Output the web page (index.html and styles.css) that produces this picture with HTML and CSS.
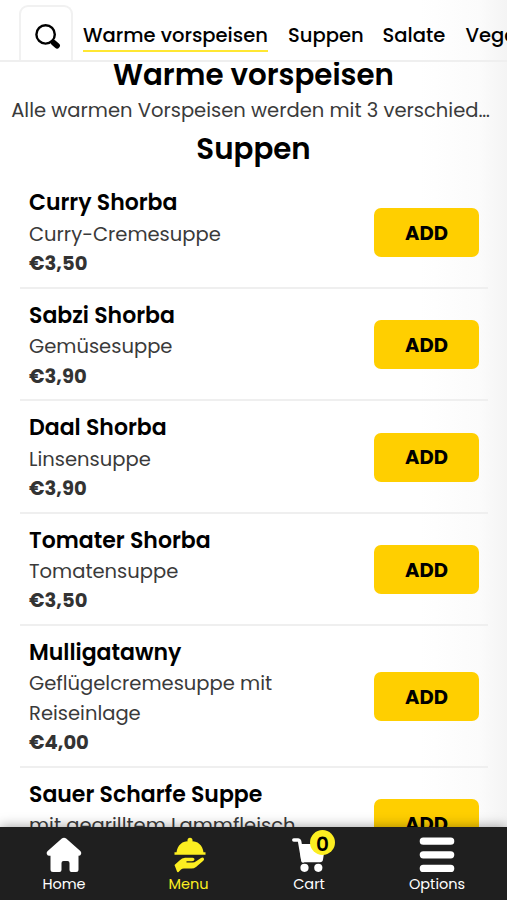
FILE: index.html
```html
<!DOCTYPE html>
<html lang="de">
<head>
<meta charset="utf-8">
<title>Menu</title>
<link rel="stylesheet" href="styles.css">
</head>
<body>
<div class="app">
  <header class="topbar">
    <button class="search" aria-label="Search">
      <svg width="26" height="26" viewBox="0 0 26 26"><circle cx="10.6" cy="10.4" r="9.2" fill="none" stroke="#000" stroke-width="2.400"/><path d="M17 16.500l1.800 1.700" stroke="#000" stroke-width="3"/><path d="M18.800 18.900l3.200 2.700" stroke="#000" stroke-width="5.800" stroke-linecap="round"/></svg>
    </button>
    <nav class="tabs">
      <a class="tab active">Warme vorspeisen</a>
      <a class="tab suppen">Suppen</a>
      <a class="tab salate">Salate</a>
      <a class="tab">Vegetarisch</a>
    </nav>
  </header>
  <main class="content">
    <h2 class="heading warm">Warme vorspeisen</h2>
    <p class="intro">Alle warmen Vorspeisen werden mit 3 verschied…</p>
    <h2 class="heading soups">Suppen</h2>
    <ul class="list">
      <li class="item"><div class="info"><h3>Curry Shorba</h3><p>Curry-Cremesuppe</p><b>€3,50</b></div><button class="add">ADD</button></li>
      <li class="item"><div class="info"><h3>Sabzi Shorba</h3><p>Gemüsesuppe</p><b>€3,90</b></div><button class="add">ADD</button></li>
      <li class="item"><div class="info"><h3>Daal Shorba</h3><p>Linsensuppe</p><b>€3,90</b></div><button class="add">ADD</button></li>
      <li class="item"><div class="info"><h3>Tomater Shorba</h3><p>Tomatensuppe</p><b>€3,50</b></div><button class="add">ADD</button></li>
      <li class="item"><div class="info"><h3>Mulligatawny</h3><p>Geflügelcremesuppe mit<br>Reiseinlage</p><b>€4,00</b></div><button class="add">ADD</button></li>
      <li class="item"><div class="info"><h3>Sauer Scharfe Suppe</h3><p>mit gegrilltem Lammfleisch</p><b>€4,00</b></div><button class="add">ADD</button></li>
    </ul>
  </main>
  <footer class="bottombar">
    <a class="dock home">
      <svg width="36" height="36" viewBox="0 0 36 36"><path d="M15.8 1.600q2.200-1.800 4.400 0L34.300 14q1.400 1.400.700 3.200-.600 1.600-2.500 1.600v13.700q0 2.500-2.500 2.500h-4.500q-2 0-2-2V26q0-2-2-2h-4q-2 0-2 2v7q0 2-2 2H7q-2.500 0-2.500-2.500V18.800H3.400q-1.900 0-2.500-1.600Q.2 15.400 1.700 14z" fill="#fff"/></svg>
      <span>Home</span>
    </a>
    <a class="dock menu">
      <svg width="36" height="36" viewBox="0 0 36 36"><g fill="#fcee21"><circle cx="19" cy="3.200" r="2.500"/><path d="M5.500 15.500Q7 4 19 4T32.500 15.500zM3.500 15.300h31v2.500H3.500z"/><path d="M3.500 28l5-4.500Q11 20.700 14 20.700H21.500q2.500.300 1.800 2.300-.600 1.300-2.800 1.300h-5v1.300h6q2 0 4-1.500l4.500-3q2-1 2.800.100.800 1.200-.500 2.500l-7.300 6.300q-2 1.600-4.500 1.600H13q-2 0-3 1L7.500 35q-1 .6-1.500-.5z"/></g></svg>
      <span>Menu</span>
    </a>
    <a class="dock cart">
      <svg width="36" height="36" viewBox="0 0 36 36"><path d="M2.800 3h4.500q1 0 1.300 1.200L12 24" fill="none" stroke="#fff" stroke-width="3.500" stroke-linecap="round" stroke-linejoin="round"/><path d="M8.500 7h26l-2.500 15.500Q31.700 25.300 29 25.300H13q-2.500 0-3-2.500z" fill="#fff"/><circle cx="13.500" cy="30.800" r="4.100" fill="#fff"/><circle cx="27.300" cy="30.800" r="4.100" fill="#fff"/></svg>
      <i class="badge">0</i>
      <span>Cart</span>
    </a>
    <a class="dock options">
      <svg width="36" height="36" viewBox="0 0 36 36"><path d="M4.300 4.200h27.400M4.300 17.800h27.400M4.300 31.400h27.400" stroke="#fff" stroke-width="7.200" stroke-linecap="round"/></svg>
      <span>Options</span>
    </a>
  </footer>
</div>
</body>
</html>
```
FILE: styles.css
```css
* { box-sizing: border-box; margin: 0; padding: 0; }
body {
  font-family: Poppins, Inter, "Liberation Sans", sans-serif;
  color: #3a3a3a;
  overflow: hidden;
}
button { font: inherit; border: 0; }
.app {
  height: 900px;
  display: flex;
  flex-direction: column;
  overflow: hidden;
  background: linear-gradient(90deg, #fff 420px, #fbfbfb 480px, #f4f4f4 507px);
}
.topbar {
  flex: none;
  height: 62px;
  display: flex;
  align-items: flex-end;
  padding-left: 19px;
  border-bottom: 2px solid #efefef;
  overflow: hidden;
}
.search {
  flex: none;
  width: 54px;
  height: 55px;
  padding: 6px 0 0 3px;
  display: flex;
  align-items: center;
  justify-content: center;
  background: #fff;
  border: 2px solid #f1f1f1;
  border-bottom: 0;
  border-radius: 9px 9px 0 0;
}
.tabs { display: flex; gap: 20px; padding: 0 0 8px 10px; }
.tab {
  height: 34px;
  line-height: 34px;
  font-size: 19.550px;
  font-weight: 500;
  color: #000;
  white-space: nowrap;
  border-bottom: 2px solid transparent;
}
.tab.active { width: 185px; border-color: #ffe733; }
.tab.suppen { width: 74.500px; }
.tab.salate { width: 63px; }
.content { flex: 1; min-height: 0; overflow: hidden; }
.heading {
  text-align: center;
  font-size: 29.300px;
  font-weight: 600;
  color: #000;
  line-height: 36px;
  white-space: nowrap;
}
.warm { line-height: 25px; }
.intro {
  text-align: center;
  font-size: 19.550px;
  line-height: 32px;
  white-space: nowrap;
  margin-right: 6px;
  padding-top: 7px;
}
.soups { margin-top: 5px; margin-bottom: 9.600px; }
.list { list-style: none; padding: 0 19px 0 20px; }
.item {
  display: flex;
  align-items: center;
  justify-content: space-between;
  padding: 9.900px 9px 8.400px;
  border-bottom: 2px solid #efefef;
}
.item h3 { font-size: 22px; font-weight: 600; line-height: 33.500px; color: #000; }
.item p { font-size: 19.550px; line-height: 29.300px; }
.item b { display: block; font-size: 19.550px; font-weight: 700; line-height: 29.300px; color: #333; }
.info { white-space: nowrap; }
.add {
  width: 105px;
  height: 49px;
  flex: none;
  border-radius: 7px;
  background: #ffcf00;
  color: #000;
  font-size: 19.550px;
  font-weight: 700;
}
.bottombar {
  flex: none;
  height: 73px;
  background: #1f1f1f;
  box-shadow: 0 0 12px rgba(0, 0, 0, .4);
  position: relative;
  display: grid;
  grid-template-columns: 128px 121px 120px 136px;
  justify-items: center;
  padding-top: 10px;
}
.dock {
  position: relative;
  width: 60px;
  display: flex;
  flex-direction: column;
  align-items: center;
  color: #fff;
  font-size: 14.500px;
  line-height: 22px;
}
.dock svg { display: block; }
.menu { color: #fcee21; }
.badge {
  position: absolute;
  left: 31px;
  top: -7px;
  width: 25px;
  height: 25px;
  border-radius: 50%;
  background: #fcee21;
  color: #000;
  font-style: normal;
  font-size: 20px;
  font-weight: 600;
  line-height: 28px;
  text-align: center;
}
```
